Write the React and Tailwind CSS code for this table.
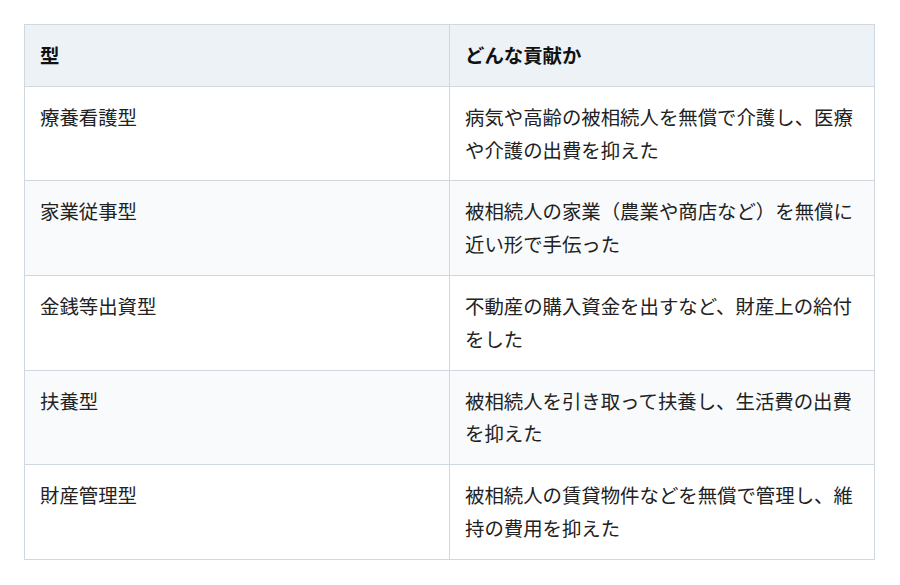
import React from "react";

const rows = [
  ["療養看護型", "病気や高齢の被相続人を無償で介護し、医療や介護の出費を抑えた"],
  ["家業従事型", "被相続人の家業（農業や商店など）を無償に近い形で手伝った"],
  ["金銭等出資型", "不動産の購入資金を出すなど、財産上の給付をした"],
  ["扶養型", "被相続人を引き取って扶養し、生活費の出費を抑えた"],
  ["財産管理型", "被相続人の賃貸物件などを無償で管理し、維持の費用を抑えた"],
];

export default function App() {
  return (
    <div
      className="w-[900px] h-[585px] bg-white pt-[24px] pl-[24px]"
      style={{ fontFamily: '"Noto Sans CJK JP", "Noto Sans", sans-serif' }}
    >
      <table className="w-[851px] border-collapse table-fixed text-[19.4px] leading-[32.8px] text-[#222]">
        <thead>
          <tr className="bg-[#edf2f7]">
            <th className="w-1/2 border border-[#cfd7e1] px-[15px] py-[14px] text-left font-bold text-[#111]">型</th>
            <th className="w-1/2 border border-[#cfd7e1] px-[15px] py-[14px] text-left font-bold text-[#111]">どんな貢献か</th>
          </tr>
        </thead>
        <tbody>
          {rows.map(([a, b], i) => (
            <tr key={i} className={i % 2 === 1 ? "bg-[#f8fafc]" : "bg-white"}>
              <td className="border border-[#cfd7e1] px-[15px] py-[14px] align-top">{a}</td>
              <td className="border border-[#cfd7e1] px-[15px] py-[14px] align-top">{b}</td>
            </tr>
          ))}
        </tbody>
      </table>
    </div>
  );
}
